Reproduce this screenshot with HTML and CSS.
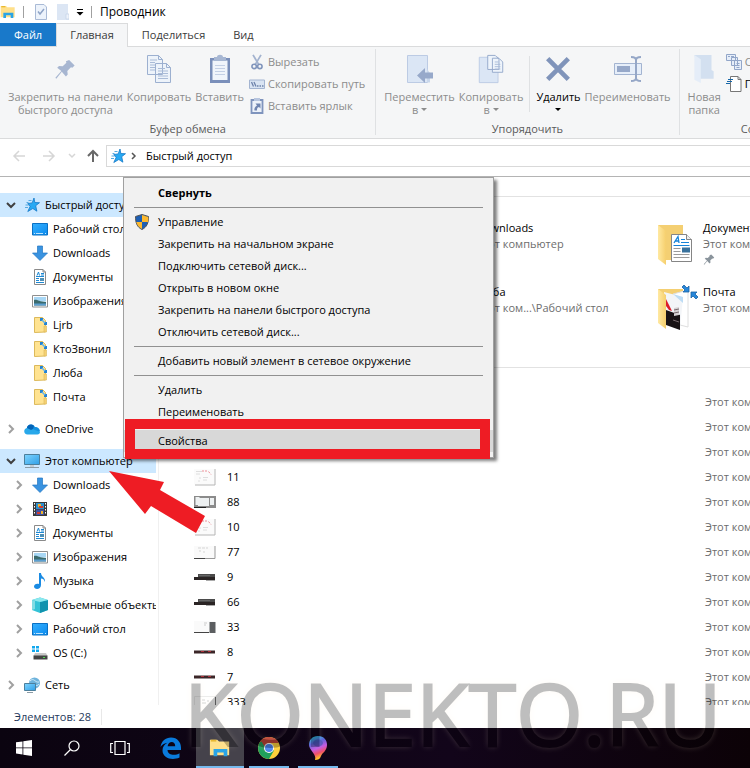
FILE: index.html
```html
<!DOCTYPE html>
<html lang="ru">
<head>
    <meta charset="UTF-8">
    <meta name="viewport" content="width=device-width, initial-scale=1.0">
    <title>Проводник</title>
    <link rel="stylesheet" href="styles.css">
</head>
<body>
    <svg class="sprite" aria-hidden="true">
        <linearGradient id="g-folder" x1="0" y1="0" x2="1" y2="0"><stop offset="0" stop-color="#ffe9a2"/><stop offset="1" stop-color="#f6cf6d"/></linearGradient>
        <linearGradient id="g-screen" x1="0" y1="0" x2="1" y2="1"><stop offset="0" stop-color="#7fd4ff"/><stop offset="1" stop-color="#2f9fe6"/></linearGradient>
        <linearGradient id="g-desk" x1="0" y1="0" x2="1" y2="1"><stop offset="0" stop-color="#35b0ff"/><stop offset="1" stop-color="#0b8bee"/></linearGradient>
        <linearGradient id="g-paint" x1="0" y1="0" x2="0.3" y2="1"><stop offset="0" stop-color="#20d6dc"/><stop offset="0.35" stop-color="#5a63d8"/><stop offset="0.6" stop-color="#c45be0"/><stop offset="0.8" stop-color="#f0506a"/><stop offset="1" stop-color="#ffc12a"/></linearGradient>
        <symbol id="i-right" viewBox="0 0 16 16"><path d="M6 4l4 4-4 4" fill="none" stroke="#a0a0a0" stroke-width="2"/></symbol>
        <symbol id="i-down" viewBox="0 0 16 16"><path d="M4 6l4 4 4-4" fill="none" stroke="#404040" stroke-width="2"/></symbol>
        <symbol id="i-star" viewBox="0 0 16 16"><path d="M10 1l.8 4.500 4.700.200-3.800 3 1.200 5.500-4.100-2.700-5 3 2.300-5-2.300-3 4.400-.600z" fill="#27a9f3" stroke="#1478c8" stroke-width=".8"/><path d="M4.500 3.500h3M2.500 5.500h2M1.500 8h3M1 10.500h3" stroke="#55a9e0"/></symbol>
        <symbol id="i-desktop" viewBox="0 0 16 16"><path d="M.5 2.500h15v11.500h-15z" fill="url(#g-desk)" stroke="#0a70c4"/><path d="M2 12.500h1M4 12.500h7M13 12.500h1" stroke="#bfe5ff"/></symbol>
        <symbol id="i-download" viewBox="0 0 16 16"><path d="M5.500 1h5v7h5l-7.500 7.500L.500 8h5z" fill="#3a93e0" stroke="#2477c2" stroke-width=".7"/></symbol>
        <symbol id="i-doc" viewBox="0 0 16 16"><path d="M2.500.5h8.500l2.500 2.500v12.500h-11z" fill="#fff" stroke="#8a8a8a"/><path d="M11 .5v2.500h2.500" fill="none" stroke="#8a8a8a"/><path d="M5 6.500l1.500-3.500 1 3.500M9 4.500h3M4 7.500h8M9 6h3M4 9.500h3M4 11.500h3M4 13.500h8" stroke="#1e88d2" fill="none"/><path d="M8 9h4v3H8z" fill="#4d8fb5"/></symbol>
        <symbol id="i-image" viewBox="0 0 16 16"><path d="M.5 2.500h15v11.500H.5z" fill="#fff" stroke="#8f8f8f"/><path d="M2 4h12v4.500H2z" fill="#a8d7f5"/><path d="M2 7c3-1 5 2 12 2v3.500H2z" fill="#3b6b6d"/><path d="M2 10.500h12v2H2z" fill="#5c9fd1"/></symbol>
        <symbol id="i-folder" viewBox="0 0 16 16"><path d="M2.500.5h8l3 3v11.500l-11 .5z" fill="#ffe391" stroke="#dcb95a"/><path d="M12 9v6h2.500V9z" fill="#f5d071" stroke="#dcb95a" stroke-width=".6"/><path d="M8 1h3v3H8zM12 5h3v3h-3z" fill="#2483d3"/><path d="M10 3l3 3" stroke="#67b3e8" stroke-width="1.500"/></symbol>
        <symbol id="i-cloud" viewBox="0 0 16 16"><path d="M2.500 8C3 4 8 1.500 11 6c3 0 5 2 5 4.500L8 13z" fill="#1490df"/><path d="M3 7c2.500-1 4 0 13 4 0 1.500-1 2.500-2.500 2.500H3.500C-.500 13.500-1 8 3 7z" fill="#28a8ea"/><path d="M3 7C3 4 7 2 10 5l-1 3-2 1z" fill="#0364b8"/></symbol>
        <symbol id="i-pc" viewBox="0 0 16 16"><path d="M.5 1.500h15v10H.5z" fill="url(#g-screen)" stroke="#4c7f9c"/><path d="M6 12h4v2H6z" fill="#c2ccd2"/><path d="M1 14.500h14" stroke="#8c9ba5"/></symbol>
        <symbol id="i-video" viewBox="0 0 16 16"><path d="M1 1h14v14H1z" fill="#3a3a3a"/><path d="M4 2h8v6H4z" fill="#2c8fd0"/><path d="M4 8.500h8V14H4z" fill="#3f53a3"/><path d="M6 3h3v3H6zM9 10h2v3H9z" fill="#f0b428"/><path d="M7 5h4v2H7zM5 11h3v2H5z" fill="#cf3b2f"/><path d="M2.500 2v12M13.500 2v12" stroke="#fff" stroke-dasharray="1.500 1.500"/></symbol>
        <symbol id="i-music" viewBox="0 0 16 16"><path d="M7 0h2c0 4 4.500 4 4 9-1-2.500-2-3.500-4-3.500V12c0 5-7 5-7 1.500 0-2 2.500-3.500 5-2.500z" fill="#1a8be3"/></symbol>
        <symbol id="i-cube" viewBox="0 0 16 16"><path d="M0 3l8-2.500L16 3v10l-8 3-8-3z" fill="#33c2d6"/><path d="M8 5l8-2v10l-8 3z" fill="#1193ae"/><path d="M0 3l8-2.500L16 3 8 5z" fill="#8be8ee"/><path d="M0 3l3 1v8l-3 1z" fill="#80dce4"/></symbol>
        <symbol id="i-drive" viewBox="0 0 16 16"><path d="M0 1h3v2.500H0zM4 1h3v2.500H4zM0 4.500h3V7H0zM4 4.500h3V7H4z" fill="#12a8ee"/><path d="M3 8h11l1.500 3h-14z" fill="#c8c8c8"/><path d="M1.500 10.500h14v4h-14z" fill="#444"/><path d="M11 12.500h2" stroke="#4be04b"/></symbol>
        <symbol id="i-network" viewBox="0 0 16 16"><circle cx="10.500" cy="6" r="5.500" fill="#6eb3dc"/><path d="M6 4c4-4 5 2 9 1M8 10c3-3 5 0 7-3" stroke="#d5edf8" fill="none"/><path d="M.5 6.500h11v7H.5z" fill="url(#g-screen)" stroke="#4c7f9c"/><path d="M3 15.500h6" stroke="#8c9ba5"/></symbol>
        <symbol id="i-shield" viewBox="0 0 16 16"><path d="M8 .5l6.500 2C14.500 9 13 13 8 15.500 3 13 1.500 9 1.500 2.500z" fill="#1d5fb4" stroke="#555"/><path d="M8 1v7h6c.3-1.500.3-3 .2-5z" fill="#fdb92e"/><path d="M8 8v7C4.500 13 3 11 2.300 8z" fill="#fdb92e"/></symbol>
        <symbol id="i-pin" viewBox="0 0 24 24"><path d="M16.500 2l6 6-2.500 2.500-1.500-.500-4 4 .5 4-2 2-4.500-5L2.500 22.500 1.500 21.500 8 14 3.500 10.500l2-2 4 .5 4-4-.500-1.500z" transform="translate(0 -1)"/></symbol>
        <symbol id="i-pages" viewBox="0 0 26 30"><path d="M1.500 1.500h11l4 4v15h-15zM9.500 9.500h11l4 4v15h-15z" fill="#edf3fa" stroke="#9cb0d0"/><path d="M12.500 1.500v4h4M20.500 9.500v4h4" fill="none" stroke="#9cb0d0"/><path d="M4 6h7M4 8.500h5M4 11h5M4 13.500h5M4 16h5M12 14.500h7M12 17h10M12 19.500h10M12 22h10M12 24.500h10" stroke="#a9bbd7"/></symbol>
        <symbol id="i-clip" viewBox="0 0 22 30"><path d="M1 4h20v25H1z" fill="#7a8fba"/><path d="M3.500 6.500h15V26h-15z" fill="#f1f5fb"/><path d="M5 3h3c0-3 6-3 6 0h3v4H5z" fill="#a7b7d3"/><path d="M6 11.500h10M6 14.500h10M6 17.500h10M6 20.500h10" stroke="#c4d0e5"/></symbol>
        <symbol id="i-cut" viewBox="0 0 14 18"><path d="M2.500 1l6.500 11M11.500 1L5 12" stroke="#a3b3cf" stroke-width="2"/><circle cx="3.800" cy="14" r="2.500" fill="none" stroke="#8095bc" stroke-width="1.800"/><circle cx="10.200" cy="14" r="2.500" fill="none" stroke="#8095bc" stroke-width="1.800"/></symbol>
        <symbol id="i-path" viewBox="0 0 16 16"><path d="M.5 4h15v8.500H.5z" fill="#d9e4f3" stroke="#a3b4d1"/><path d="M2.500 6l2 4.500M5 6l2 4.500M8 10h1.500M10.500 10H12M13 10h1.500" stroke="#6d82ab" stroke-width="1.300"/></symbol>
        <symbol id="i-shortcut" viewBox="0 0 14 16"><path d="M1.500 2h11v13h-11z" fill="#edf2fa" stroke="#7f94bd" stroke-width="1.800"/><path d="M4 0h6v3H4z" fill="#b8c6df"/><path d="M5.500 5.500h5v5L9 9c-2 .5-2 1.500-2 3.500H4.500c-.500-2 .5-4 2.500-5z" fill="#7085b0"/></symbol>
        <symbol id="i-move" viewBox="0 0 28 30"><path d="M1.500 1.500h20v27h-20z" fill="#dbe6f5" stroke="#bccbe4"/><path d="M21 15l3 4v9.500h-3z" fill="#c9d7eb"/><path d="M11 21.500l8-7.500v4.500h8v6h-8V29z" fill="#97a9ca"/></symbol>
        <symbol id="i-copyto" viewBox="0 0 28 32"><path d="M1.500 3.500h20v27h-20z" fill="#dbe6f5" stroke="#bccbe4"/><path d="M10.500 1.500h8l4 4v11h-12zM15.500 4.500h7l4 4v11h-11z" fill="#eef4fb" stroke="#94a9cb"/><path d="M18 8.500h4M18 11h6M18 13.500h6M18 16h6" stroke="#a9bbd7"/></symbol>
        <symbol id="i-delete" viewBox="0 0 32 32"><path d="M5 5l22 22M27 5L5 27" stroke="#8094ba" stroke-width="5"/></symbol>
        <symbol id="i-rename" viewBox="0 0 30 28"><path d="M1.500 8.500h27v11h-27z" fill="#e6eef9" stroke="#a3b4d1"/><path d="M4 11h13v6H4z" fill="#96a8c9"/><path d="M18 2c2 0 5 .5 5 3v18c0 2.500-3 3-5 3M28 2c-2 0-5 .5-5 3v18c0 2.500 3 3 5 3" fill="none" stroke="#95a7c7" stroke-width="2"/></symbol>
        <symbol id="i-newfolder" viewBox="0 0 20 28"><path d="M1 1h16v14l2 1v7H6z" fill="#d3e0f0"/><path d="M1 1l6 4v22l-6-3z" fill="#e5edf8"/></symbol>
        <symbol id="i-newitem" viewBox="0 0 16 16"><path d="M.5.500h9v6h-9zM5.500 3.500h6v8h-6zM8.500 6.500h7v9h-7z" fill="#e6eef9" stroke="#92a6c9"/><path d="M2 2.500h2M5 2.500h3M10.500 9.500h3M10.500 11.500h3M10.500 13.500h3" stroke="#92a6c9"/></symbol>
        <symbol id="i-easy" viewBox="0 0 16 16"><path d="M4.500.5h7.500l3 3v12H4.500z" fill="#fff" stroke="#777"/><path d="M12 .5v3h3" fill="none" stroke="#777"/><path d="M2 3.500h5M1 5.500h5M0 7.500h4" stroke="#1767a8" stroke-width="1.200"/></symbol>
        <symbol id="i-explorer" viewBox="0 0 24 20"><path d="M1 1h8l2 2h11v15H1z" fill="#ffe08a"/><path d="M2 1h6v2H2z" fill="#e9b931"/><path d="M5 19v-8h15v8h-4v-4H9v4z" fill="#2aa4e6"/></symbol>
        <symbol id="i-bigfolder" viewBox="0 0 40 48"><path d="M3 5h25v35H7z" fill="#f4cf72"/><path d="M3 5l8 6v34l-8-6z" fill="url(#g-folder)"/></symbol>
        <symbol id="t-page" viewBox="0 0 22 18"><path d="M0 1h20.500v15.500H0z" fill="#fbfbfb"/><path d="M21 1v16H1" fill="none" stroke="#b5b5b5"/><path d="M2 3.500h6M2 6h4M5 10h2M9 9.500h5M9 12h4M4 13h2" stroke="#dedede"/><path d="M8 3h5M14.500 3.500l2.500 3" stroke="#ee8f98" stroke-dasharray="2 1"/></symbol>
        <symbol id="t-frame" viewBox="0 0 22 18"><path d="M0 3h22v12H0z" fill="#8b8b8b"/><path d="M1.500 4h4v8h-4zM4 5h11v8H4zM16 5h4v7h-4z" fill="#eef1f2"/><path d="M0 14.500h12" stroke="#222"/></symbol>
        <symbol id="t-plain" viewBox="0 0 22 18"><path d="M0 3h21v12H0z" fill="#fafafa"/><path d="M21 3v12.500H0" fill="none" stroke="#999"/><path d="M0 15.500h11" stroke="#444"/><path d="M4 5h3M8 5h3M5 8h2M12 5h2M9 9h2" stroke="#d5d5d5"/></symbol>
        <symbol id="t-dark" viewBox="0 0 22 18"><path d="M4 6h17v4H4z" fill="#4b4b4b"/><path d="M0 9h21v3H0z" fill="#2a2424"/><path d="M12 12.500h9" stroke="#aaa"/><path d="M5 7.500h11" stroke="#666"/></symbol>
        <symbol id="t-split" viewBox="0 0 22 18"><path d="M0 3h21v12H0z" fill="#fafafa"/><path d="M15.500 4h6v11h-6z" fill="#5b5e60"/><path d="M0 14.500h15" stroke="#444"/><path d="M10 5h3M10 7h2" stroke="#ccc"/></symbol>
        <symbol id="t-strip" viewBox="0 0 22 18"><path d="M0 7.500h21v3H0z" fill="#3b2628"/><path d="M7 8.500h3M14 8.500h3" stroke="#b3303a"/></symbol>
        <symbol id="t-blank" viewBox="0 0 22 18"><path d="M.5 3.500H21M.5 3.500V16" stroke="#ececec" fill="none"/><path d="M21.500 4v13" stroke="#777"/><path d="M8 7h3M8 10h4M13 8h2" stroke="#d5d5d5"/></symbol>
    </svg>

    <header class="titlebar">
        <svg class="app-icon"><use href="#i-explorer"/></svg>
        <span class="bar-sep"></span>
        <button class="quick" aria-label="Свойства"><svg viewBox="0 0 12 16"><path d="M.5.5h8.500l2.500 2.500v12.500H.5z" fill="#edf3fb" stroke="#a9bad6"/><path d="M3 7.500l2 2.500 4-5" fill="none" stroke="#8ea3c6" stroke-width="1.500"/></svg></button>
        <button class="quick" aria-label="Новая папка"><svg viewBox="0 0 12 16"><path d="M0 0h11v10l1 1v5H0z" fill="#dce6f4"/><path d="M9 10h3v5H9z" fill="#eef3fa" stroke="#c3d1e6" stroke-width=".7"/></svg></button>
        <button class="quick-more" aria-label="Настройка панели"><svg viewBox="0 0 8 8"><path d="M1 1.500h6" stroke="#000"/><path d="M.5 4h7L4 7.500z"/></svg></button>
        <span class="bar-sep"></span>
        <h1 class="title">Проводник</h1>
    </header>

    <nav class="tabs">
        <a class="tab tab-file" href="#">Файл</a>
        <a class="tab tab-active" href="#">Главная</a>
        <a class="tab" href="#">Поделиться</a>
        <a class="tab" href="#">Вид</a>
    </nav>

    <div class="ribbon">
        <section class="group">
            <div class="tools">
                <button class="tool" disabled><svg class="pin-icon"><use href="#i-pin"/></svg><span>Закрепить на панели<br>быстрого доступа</span></button>
                <button class="tool" disabled><svg><use href="#i-pages"/></svg><span>Копировать</span></button>
                <button class="tool" disabled><svg><use href="#i-clip"/></svg><span>Вставить</span></button>
                <div class="small-tools">
                    <button class="small-tool" disabled><svg><use href="#i-cut"/></svg>Вырезать</button>
                    <button class="small-tool" disabled><svg><use href="#i-path"/></svg>Скопировать путь</button>
                    <button class="small-tool" disabled><svg><use href="#i-shortcut"/></svg>Вставить ярлык</button>
                </div>
            </div>
            <h2 class="group-name">Буфер обмена</h2>
        </section>
        <section class="group">
            <div class="tools">
                <button class="tool" disabled><svg><use href="#i-move"/></svg><span>Переместить<br>в <i class="caret"></i></span></button>
                <button class="tool" disabled><svg><use href="#i-copyto"/></svg><span>Копировать<br>в <i class="caret"></i></span></button>
                <span class="tool-sep"></span>
                <button class="tool"><svg><use href="#i-delete"/></svg><span>Удалить<br><i class="caret"></i></span></button>
                <button class="tool" disabled><svg><use href="#i-rename"/></svg><span>Переименовать</span></button>
            </div>
            <h2 class="group-name">Упорядочить</h2>
        </section>
        <section class="group">
            <div class="tools">
                <button class="tool" disabled><svg><use href="#i-newfolder"/></svg><span>Новая<br>папка</span></button>
                <div class="small-tools">
                    <button class="small-tool" disabled><svg><use href="#i-newitem"/></svg>Создать элемент</button>
                    <button class="small-tool"><svg><use href="#i-easy"/></svg>Простой доступ</button>
                </div>
            </div>
            <h2 class="group-name">Создать</h2>
        </section>
    </div>

    <div class="address-row">
        <button class="go" aria-label="Назад" disabled><svg viewBox="0 0 14 14"><path d="M13 7H2M7 2L2 7l5 5" fill="none" stroke="#d6d6d6" stroke-width="1.500"/></svg></button>
        <button class="go" aria-label="Вперед" disabled><svg viewBox="0 0 14 14"><path d="M1 7h11M7 2l5 5-5 5" fill="none" stroke="#d6d6d6" stroke-width="1.500"/></svg></button>
        <button class="go go-history" aria-label="Последние расположения" disabled><svg viewBox="0 0 14 14"><path d="M4 5l3 3 3-3" fill="none" stroke="#d6d6d6" stroke-width="1.500"/></svg></button>
        <button class="go go-up" aria-label="Вверх"><svg viewBox="0 0 14 14"><path d="M7 13V2M2 7l5-5 5 5" fill="none" stroke="#686868" stroke-width="2"/></svg></button>
        <div class="address">
            <svg><use href="#i-star"/></svg>
            <svg viewBox="0 0 16 16"><path d="M6 5l3 3-3 3" fill="none" stroke="#555" stroke-width="1.500"/></svg>
            <a href="#">Быстрый доступ</a>
        </div>
    </div>

    <main class="main">
        <nav class="tree">
            <a class="node selected" href="#"><svg><use href="#i-down"/></svg><svg><use href="#i-star"/></svg>Быстрый доступ</a>
            <a class="node sub" href="#"><svg></svg><svg><use href="#i-desktop"/></svg>Рабочий стол</a>
            <a class="node sub" href="#"><svg></svg><svg><use href="#i-download"/></svg>Downloads</a>
            <a class="node sub" href="#"><svg></svg><svg><use href="#i-doc"/></svg>Документы</a>
            <a class="node sub" href="#"><svg></svg><svg><use href="#i-image"/></svg>Изображения</a>
            <a class="node sub" href="#"><svg></svg><svg><use href="#i-folder"/></svg>Ljrb</a>
            <a class="node sub" href="#"><svg></svg><svg><use href="#i-folder"/></svg>КтоЗвонил</a>
            <a class="node sub" href="#"><svg></svg><svg><use href="#i-folder"/></svg>Люба</a>
            <a class="node sub" href="#"><svg></svg><svg><use href="#i-folder"/></svg>Почта</a>
            <a class="node top" href="#"><svg><use href="#i-right"/></svg><svg><use href="#i-cloud"/></svg>OneDrive</a>
            <a class="node top selected" href="#"><svg><use href="#i-down"/></svg><svg><use href="#i-pc"/></svg>Этот компьютер</a>
            <a class="node sub" href="#"><svg><use href="#i-right"/></svg><svg><use href="#i-download"/></svg>Downloads</a>
            <a class="node sub" href="#"><svg><use href="#i-right"/></svg><svg><use href="#i-video"/></svg>Видео</a>
            <a class="node sub" href="#"><svg><use href="#i-right"/></svg><svg><use href="#i-doc"/></svg>Документы</a>
            <a class="node sub" href="#"><svg><use href="#i-right"/></svg><svg><use href="#i-image"/></svg>Изображения</a>
            <a class="node sub" href="#"><svg><use href="#i-right"/></svg><svg><use href="#i-music"/></svg>Музыка</a>
            <a class="node sub" href="#"><svg><use href="#i-right"/></svg><svg><use href="#i-cube"/></svg>Объемные объекты</a>
            <a class="node sub" href="#"><svg><use href="#i-right"/></svg><svg><use href="#i-desktop"/></svg>Рабочий стол</a>
            <a class="node sub" href="#"><svg><use href="#i-right"/></svg><svg><use href="#i-drive"/></svg>OS (C:)</a>
            <a class="node top" href="#"><svg><use href="#i-right"/></svg><svg><use href="#i-network"/></svg>Сеть</a>
        </nav>

        <div class="content">
            <section class="folders">
                <article class="folder folder-second">
                    <svg><use href="#i-bigfolder"/></svg>
                    <div><h3>Downloads</h3><p>Этот компьютер</p></div>
                </article>
                <article class="folder">
                    <svg viewBox="0 0 40 48">
                        <use href="#i-bigfolder"/>
                        <path d="M16.500 14.500h15l5 5v22h-20z" fill="#fff" stroke="#858585"/>
                        <path d="M31.500 14.500v5h5" fill="#eee" stroke="#858585"/>
                        <path d="M19 23l4-6.500 1 6.500M20.500 21h3" fill="none" stroke="#1583d8" stroke-width="1.300"/>
                        <path d="M26 19.500h4M26 22.500h8M18.500 25.500h16" stroke="#1583d8" stroke-width="1.200"/>
                        <path d="M18.500 28.500h7M18.500 31.500h7M18.500 34.500h16M18.500 37.500h16" stroke="#9a9a9a"/>
                        <path d="M27 27.500h8v5h-8z" fill="#38719c"/>
                    </svg>
                    <div><h3>Документы</h3><p>Этот компьютер</p><svg class="pinned"><use href="#i-pin"/></svg></div>
                </article>
                <article class="folder folder-second">
                    <svg><use href="#i-bigfolder"/></svg>
                    <div><h3>Люба</h3><p>Этот ком...\Рабочий стол</p></div>
                </article>
                <article class="folder">
                    <svg viewBox="0 0 40 48">
                        <path d="M3 5h25v6H3z" fill="#f4cf72"/>
                        <path d="M18 10l15-4v37l-8-2z" fill="#fff" stroke="#dedede"/>
                        <path d="M9 8l19 5-3 32-14-5z" fill="#f3f5f8"/>
                        <path d="M18 10l10 3v6z" fill="#bcdcf5"/>
                        <path d="M11 26l14 5v15l-14-5z" fill="#191315"/>
                        <path d="M11 15l6 12-3-1-3-4z" fill="#dc1d2b"/>
                        <path d="M19 24l5-1v8l-5 1z" fill="#d6d2d4"/>
                        <path d="M19 26l5-1M19 29l5-1M18 36l6 2" stroke="#77696d"/>
                        <path d="M3 5l8 6v34l-8-6z" fill="url(#g-folder)"/>
                        <path d="M27 3l2-2 3 3 2-2v6h-6l2-2zM43 13l-2 2-3-3-2 2V8h6l-2 2z" fill="#2787d9" stroke="#1b62a5" stroke-width=".8"/>
                    </svg>
                    <div><h3>Почта</h3><p>Этот компьютер</p></div>
                </article>
            </section>

            <table class="files">
                <colgroup><col class="col-thumb"><col class="col-name"><col></colgroup>
                <tr><td></td><td></td><td>Этот компьютер</td></tr>
                <tr><td></td><td></td><td>Этот компьютер</td></tr>
                <tr><td></td><td></td><td>Этот компьютер</td></tr>
                <tr><td><svg><use href="#t-page"/></svg></td><td>11</td><td>Этот компьютер</td></tr>
                <tr><td><svg><use href="#t-frame"/></svg></td><td>88</td><td>Этот компьютер</td></tr>
                <tr><td><svg><use href="#t-page"/></svg></td><td>10</td><td>Этот компьютер</td></tr>
                <tr><td><svg><use href="#t-plain"/></svg></td><td>77</td><td>Этот компьютер</td></tr>
                <tr><td><svg><use href="#t-dark"/></svg></td><td>9</td><td>Этот компьютер</td></tr>
                <tr><td><svg><use href="#t-dark"/></svg></td><td>66</td><td>Этот компьютер</td></tr>
                <tr><td><svg><use href="#t-split"/></svg></td><td>33</td><td>Этот компьютер</td></tr>
                <tr><td><svg><use href="#t-strip"/></svg></td><td>8</td><td>Этот компьютер</td></tr>
                <tr><td><svg><use href="#t-strip"/></svg></td><td>7</td><td>Этот компьютер</td></tr>
                <tr><td><svg><use href="#t-blank"/></svg></td><td>333</td><td>Этот компьютер</td></tr>
            </table>
        </div>
    </main>

    <footer class="status"><span>Элементов: 28</span></footer>

    <div class="taskbar">
        <button class="task" aria-label="Пуск"><svg viewBox="0 0 16 16"><path d="M0 2.300l6.500-.900v6.100H0zM7.300 1.300L16 0v7.500H7.300zM0 8.300h6.500v6.200L0 13.600zM7.300 8.300H16V16l-8.700-1.200z" fill="#fff"/></svg></button>
        <button class="task" aria-label="Поиск"><svg viewBox="0 0 16 16"><circle cx="10" cy="6" r="5" fill="none" stroke="#fff" stroke-width="1.200"/><path d="M6.500 9.500L.5 15.500" stroke="#fff" stroke-width="1.300"/></svg></button>
        <button class="task" aria-label="Представление задач"><svg class="wide" viewBox="0 0 20 16"><path d="M5 1.500h10v13H5zM3 3.500H.7v9H3M17 3.500h2.300v9H17" fill="none" stroke="#fff" stroke-width="1.200"/></svg></button>
        <div class="apps">
            <button class="task" aria-label="Edge"><svg class="app" viewBox="0 0 22 22"><path d="M.5 10C1.500 4 5.500.5 11 .5c6.500 0 10 5 10 10V13H7.500c.3 5.500 8 6 12 3.200v4.300C12 24 2.500 21 2.500 13.500c0-4 2.200-6.500 5-7.800C5 6 2 7.500.5 10zM7.600 9.200h7.600c.1-6-7-5.500-7.600 0z" fill="#0a7bdc"/></svg></button>
            <button class="task open active" aria-label="Проводник"><svg class="app"><use href="#i-explorer"/></svg></button>
            <button class="task open" aria-label="Chrome"><svg class="app" viewBox="0 0 22 22"><circle cx="11" cy="11" r="11" fill="#fdd03b"/><path d="M11 11L1.500 5.500A11 11 0 0 0 11 22l5-8.500z" fill="#1fa05c"/><path d="M1.500 5.500A11 11 0 0 1 20.700 6H11L6.500 14z" fill="#bd4438"/><path d="M1.500 5.500L6.500 14l2-1-5-8.500z" fill="#1fa05c"/><circle cx="11" cy="11" r="5" fill="#fff"/><circle cx="11" cy="11" r="4" fill="#4a84ef"/></svg></button>
            <button class="task open" aria-label="Paint 3D"><svg class="app" viewBox="0 0 22 24"><path d="M11 0c6 0 9 4 9 9 0 6-5 8-6 11s-3 4-6 4c1-3-.5-5-2.500-8S2 11 2 9c0-5 3-9 9-9z" fill="url(#g-paint)"/><ellipse cx="11" cy="7" rx="5" ry="3.500" fill="#3c4fae" opacity=".6"/></svg></button>
        </div>
    </div>

    <div class="menu" role="menu">
        <button class="item default" role="menuitem">Свернуть</button>
        <hr>
        <button class="item" role="menuitem"><svg><use href="#i-shield"/></svg>Управление</button>
        <button class="item" role="menuitem">Закрепить на начальном экране</button>
        <button class="item" role="menuitem">Подключить сетевой диск...</button>
        <button class="item" role="menuitem">Открыть в новом окне</button>
        <button class="item" role="menuitem">Закрепить на панели быстрого доступа</button>
        <button class="item" role="menuitem">Отключить сетевой диск...</button>
        <hr>
        <button class="item" role="menuitem">Добавить новый элемент в сетевое окружение</button>
        <hr>
        <button class="item" role="menuitem">Удалить</button>
        <button class="item" role="menuitem">Переименовать</button>
        <hr>
        <button class="item hover" role="menuitem">Свойства</button>
        <div class="frame"></div>
    </div>

    <svg class="pointer" viewBox="0 0 96 62"><path d="M0 0l55 11-4 8 45 26-9 17-45-27-6 8z" fill="#ee1c24"/></svg>
    <div class="watermark">KONEKTO.RU</div>
</body>
</html>
```

FILE: styles.css
```css
* {
    box-sizing: border-box;
}
body {
    margin: 0;
    height: 100vh;
    display: flex;
    flex-direction: column;
    position: relative;
    overflow: hidden;
    background: #fff;
    color: #000;
    font: 11px/16px "Open Sans", "Noto Sans", sans-serif;
}
a {
    color: inherit;
    text-decoration: none;
}
button {
    font: inherit;
    color: inherit;
    background: none;
    border: 0;
    padding: 0;
}
h1, h2, h3, p {
    margin: 0;
    font-size: 11px;
    font-weight: normal;
}
svg {
    flex: none;
    width: 16px;
    height: 16px;
}
.sprite {
    position: absolute;
    width: 0;
    height: 0;
}

/* title bar */
.titlebar {
    flex: none;
    height: 23px;
    display: flex;
    align-items: center;
    gap: 4px;
}
.title {
    font-size: 12px;
}
.bar-sep {
    width: 1px;
    height: 12px;
    margin: 0 4px 0 3px;
    background: #a0a0a0;
}
.quick {
    display: flex;
    width: 18px;
    justify-content: center;
}
.quick svg {
    width: 12px;
}
.quick-more {
    display: flex;
}
.quick-more svg {
    width: 8px;
    height: 8px;
}

/* ribbon tabs */
.tabs {
    flex: none;
    display: flex;
    height: 24px;
    border-bottom: 1px solid #dadbdc;
    color: #3b3b3b;
}
.tab {
    padding: 4px 14px;
}
.tab-file {
    background: #1979ca;
    color: #fff;
}
.tab-active {
    height: 24px;
    padding: 3px 13px;
    background: #f5f6f7;
    border: 1px solid #dadbdc;
    border-bottom: 0;
}

/* ribbon */
.ribbon {
    flex: none;
    display: flex;
    height: 92px;
    padding: 2px 0 3px;
    background: #f5f6f7;
    border-bottom: 1px solid #dadbdc;
    overflow: hidden;
}
.group {
    flex: none;
    display: flex;
    flex-direction: column;
    justify-content: space-between;
    padding: 0 6px;
    border-right: 1px solid #dfe1e3;
}
.tools {
    display: flex;
    align-items: flex-start;
}
.tool {
    display: flex;
    flex-direction: column;
    align-items: center;
    padding: 5px 2px 0;
    line-height: 13px;
}
.tool svg {
    width: 30px;
    height: 30px;
    margin-bottom: 6px;
}
.tool .pin-icon {
    width: 22px;
    height: 22px;
    margin: 5px 0 9px;
    fill: #a7b6d1;
}
.tool:disabled, .small-tool:disabled {
    color: #8c8c8c;
}
.tool-sep {
    width: 1px;
    height: 56px;
    margin: 7px 4px 0;
    background: #dfe1e3;
}
.caret {
    display: inline-block;
    border: 3px solid transparent;
    border-top-color: currentColor;
    border-bottom: 0;
    vertical-align: 3px;
}
.small-tools {
    padding: 2px 0 0 3px;
}
.small-tool {
    display: flex;
    align-items: center;
    gap: 3px;
    height: 22px;
    padding-right: 4px;
}
.group-name {
    text-align: center;
    color: #5a5a5a;
    line-height: 13px;
}

/* address row */
.address-row {
    flex: none;
    display: flex;
    align-items: center;
    gap: 16px;
    height: 38px;
    padding: 0 0 4px 12px;
    border-bottom: 1px solid #b4b4b4;
}
.go {
    display: flex;
}
.go svg {
    width: 14px;
    height: 14px;
}
.go-history {
    margin: 0 -9px 0 -7px;
}
.go-up {
    margin-right: -10px;
}
.address {
    flex: 1;
    display: flex;
    align-items: center;
    height: 22px;
    padding-left: 3px;
    border: 1px solid #d9d9d9;
    border-right: 0;
}
.address a {
    margin-left: 4px;
}

/* main area */
.main {
    flex: 1;
    min-height: 0;
    display: flex;
    overflow: hidden;
}
.tree {
    flex: none;
    width: 159px;
    padding: 16px 2px 0 0;
    border-right: 1px solid #f0f0f0;
}
.node {
    display: flex;
    align-items: center;
    gap: 5px;
    height: 24px;
    padding-left: 3px;
    white-space: nowrap;
    overflow: hidden;
}
.sub {
    padding-left: 11px;
}
.top {
    margin-top: 8px;
}
.selected {
    background: #cce8ff;
}
.content {
    flex: 1;
    min-width: 0;
    padding-top: 19px;
    overflow: hidden;
}
.folders {
    display: grid;
    grid-template-columns: 227px 227px 227px;
    grid-auto-rows: 64px;
    height: 172px;
    padding: 15px 0 0 42px;
    border: 1px solid #e2e2e2;
    border-width: 1px 0;
}
.folder {
    grid-column: 3;
    display: flex;
    gap: 8px;
    padding-top: 8px;
    white-space: nowrap;
}
.folder-second {
    grid-column: 2;
}
.folder svg {
    width: 40px;
    height: 48px;
    overflow: visible;
}
.folder p {
    color: #6d6d6d;
}
.folder .pinned {
    display: block;
    width: 12px;
    height: 16px;
    fill: #8a949c;
}
.files {
    table-layout: fixed;
    width: calc(100% - 35px);
    margin: 21px 0 0 35px;
    border-collapse: collapse;
}
.files tr {
    height: 25px;
}
.files td {
    padding: 0;
    white-space: nowrap;
}
.files td:last-child {
    color: #6d6d6d;
}
.files svg {
    display: block;
    width: 22px;
    height: 18px;
}
.col-thumb {
    width: 33px;
}
.col-name {
    width: 478px;
}

/* status bar */
.status {
    flex: none;
    display: flex;
    align-items: center;
    height: 23px;
    padding-left: 14px;
    color: #1e395b;
}
.status span {
    padding-right: 10px;
    border-right: 1px solid #e8e8e8;
}

/* taskbar */
.taskbar {
    flex: none;
    display: flex;
    height: 40px;
    background: linear-gradient(90deg, #0b0410, #12051a 60%, #0c0207);
}
.apps {
    display: flex;
    gap: 1px;
    margin-left: 3px;
}
.task {
    display: flex;
    align-items: center;
    justify-content: center;
    width: 48px;
    height: 40px;
}
.task .wide {
    width: 20px;
}
.task .app {
    width: 22px;
    height: 24px;
}
.open {
    border: 4px solid transparent;
    border-width: 0 4px;
    background: linear-gradient(#76b9ed, #76b9ed) bottom / 100% 2px no-repeat padding-box;
}
.active {
    border: 0;
    background-color: #45424b;
}

/* context menu */
.menu {
    position: absolute;
    left: 123px;
    top: 177px;
    width: 371px;
    padding: 4px 0 5px;
    background: #f1f1f1;
    border: 1px solid #a0a0a0;
    box-shadow: 3px 3px 3px rgba(0, 0, 0, 0.5);
}
.item {
    display: flex;
    align-items: center;
    gap: 8px;
    width: 100%;
    height: 22px;
    padding-left: 34px;
}
.item svg {
    margin-left: -24px;
}
.default {
    font-weight: bold;
}
.hover {
    background: #d8d8d8;
}
.menu hr {
    margin: 3px 10px;
    border: 0;
    border-top: 1px solid #919191;
}

/* annotations */
.frame {
    position: absolute;
    left: 1px;
    right: 3px;
    bottom: -2px;
    height: 40px;
    border: 10px solid #ee1c24;
}
.pointer {
    position: absolute;
    left: 109px;
    top: 471px;
    width: 96px;
    height: 62px;
}
.watermark {
    position: absolute;
    left: 184px;
    top: 663px;
    font: 86px/100px "Open Sans", "Noto Sans", sans-serif;
    color: #000;
    -webkit-text-stroke: 2px #000;
    text-shadow: 0 0 6px #fff0d2;
    opacity: 0.25;
    pointer-events: none;
}
```
